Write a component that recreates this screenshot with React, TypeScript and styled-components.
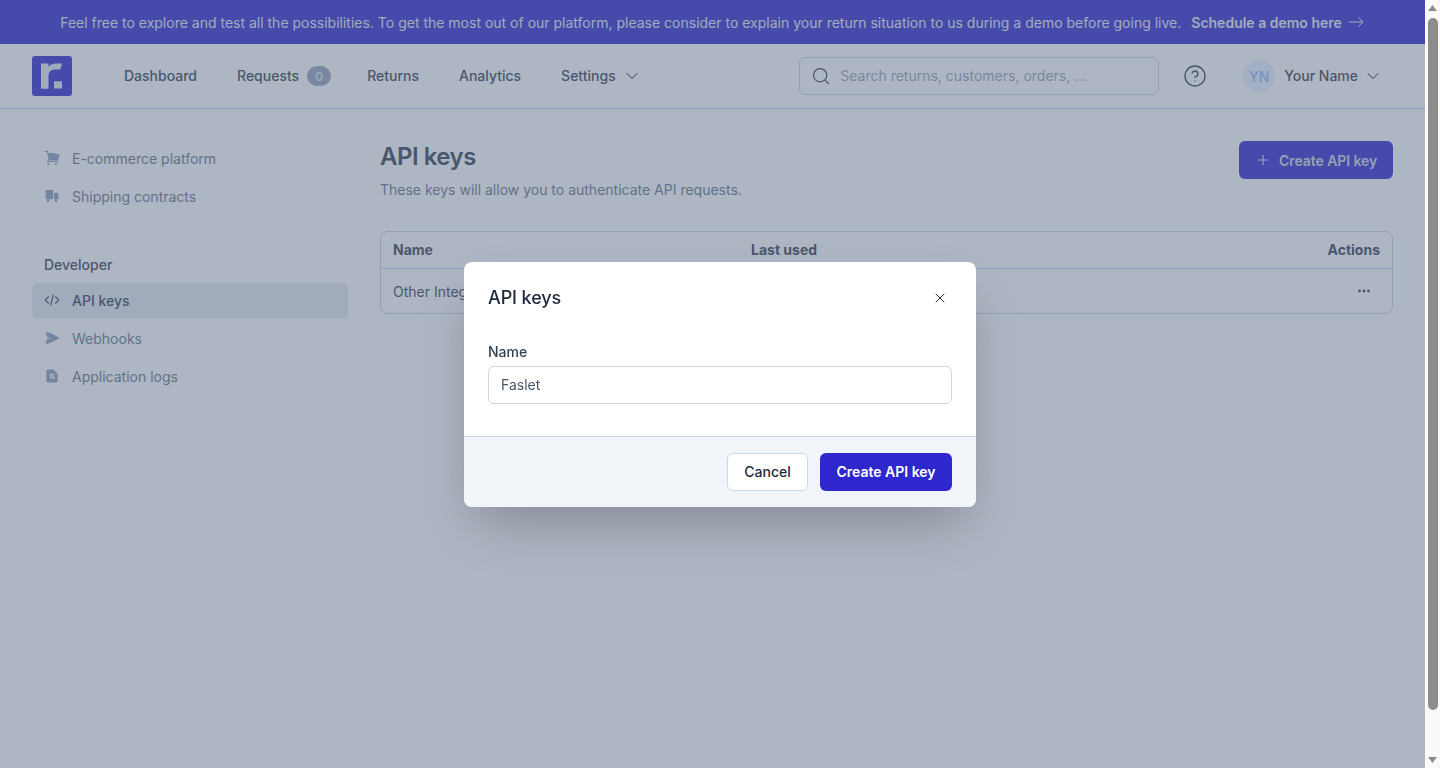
import React from "react";
import styled, { createGlobalStyle } from "styled-components";
import { ChevronDown, CircleHelp, Plus, Search, X } from "lucide-react";

const GlobalStyle = createGlobalStyle`
  html, body {
    margin: 0;
    padding: 0;
    height: 100%;
    overflow: hidden;
    background: #ffffff;
    font-family: "Inter", "Liberation Sans", sans-serif;
    font-size: 14px;
    color: #334155;
  }
  * { box-sizing: border-box; }
`;

const Page = styled.div`
  height: 768px;
  padding-right: 15px;
  display: flex;
  flex-direction: column;
`;

const Banner = styled.div`
  height: 44px;
  flex: none;
  display: flex;
  align-items: center;
  justify-content: center;
  gap: 10px;
  background: #2e27ce;
  color: #e2e8f0;
  font-size: 14px;
`;

const BannerLink = styled.a`
  display: flex;
  align-items: center;
  gap: 7px;
  font-weight: 600;
  color: #e2e8f0;
`;

const ArrowIcon = styled.svg`
  width: 16px;
  height: 14px;
  fill: none;
  stroke: currentColor;
  stroke-width: 1;
`;

const Header = styled.header`
  height: 65px;
  flex: none;
  display: flex;
  align-items: center;
  padding: 0 32px;
  border-bottom: 1px solid #c5d3e6;
  background: #ffffff;
`;

const Logo = styled.svg`
  width: 40px;
  height: 40px;
  flex: none;
  margin-right: 52px;
`;

const Nav = styled.nav`
  display: flex;
  align-items: center;
  gap: 40px;
`;

const NavItem = styled.a`
  display: flex;
  align-items: center;
  gap: 8px;
  font-weight: 500;
  color: #334155;
`;

const NavLabel = styled.span`
  padding-bottom: 2px;
`;

const CountBadge = styled.span`
  width: 24px;
  height: 20px;
  margin-right: -4px;
  border-radius: 10px;
  background: #94a3b8;
  color: #e2e8f0;
  font-size: 12px;
  display: flex;
  align-items: center;
  justify-content: center;
`;

const NavChevron = styled(ChevronDown)`
  margin-left: -2px;
`;

const SearchBox = styled.div`
  width: 360px;
  height: 38px;
  margin-left: auto;
  display: flex;
  align-items: center;
  gap: 9px;
  padding: 0 11px;
  border: 1px solid #c5d3e6;
  border-radius: 6px;
  color: #334155;
`;

const SearchHint = styled.span`
  padding-bottom: 2px;
  color: #94a3b8;
`;

const HelpButton = styled.span`
  display: flex;
  margin-left: 24px;
  color: #334155;
`;

const UserMenu = styled.div`
  display: flex;
  align-items: center;
  margin-left: 36px;
  margin-right: 10px;
  font-weight: 500;
  color: #334155;
`;

const Avatar = styled.span`
  width: 32px;
  height: 32px;
  border-radius: 50%;
  background: #e8f0fe;
  color: #93b4fa;
  display: flex;
  align-items: center;
  justify-content: center;
  margin-right: 9px;
`;

const UserChevron = styled(ChevronDown)`
  margin-left: 5px;
`;

const Body = styled.div`
  flex: 1;
  display: flex;
  gap: 32px;
  padding: 32px;
`;

const Sidebar = styled.aside`
  width: 316px;
  flex: none;
`;

const SideGroup = styled.div`
  display: flex;
  flex-direction: column;
  gap: 2px;
  margin-bottom: 30px;
`;

const SideHeading = styled.div`
  height: 36px;
  padding: 2px 12px 0;
  display: flex;
  align-items: center;
  font-weight: 500;
  color: #334155;
`;

const SideItem = styled.a<{ $active?: boolean }>`
  height: 36px;
  padding: 0 12px 2px;
  display: flex;
  align-items: center;
  gap: 12px;
  border-radius: 6px;
  font-weight: ${({ $active }) => ($active ? 500 : 400)};
  background: ${({ $active }) => ($active ? "#e2e8f0" : "transparent")};
  color: ${({ $active }) => ($active ? "#334155" : "#64748b")};
  svg {
    width: 16px;
    height: 16px;
    flex: none;
    color: ${({ $active }) => ($active ? "#475569" : "#8a9dbb")};
  }
`;

const Main = styled.main`
  flex: 1;
  min-width: 0;
`;

const TitleRow = styled.div`
  display: flex;
  align-items: flex-start;
  justify-content: space-between;
  margin-bottom: 31px;
`;

const Title = styled.h1`
  margin: 0 0 7px;
  font-size: 24px;
  line-height: 32px;
  font-weight: 600;
  letter-spacing: -0.5px;
  color: #334155;
`;

const Subtitle = styled.p`
  margin: 0;
  line-height: 20px;
  color: #64748b;
`;

const PrimaryButton = styled.button`
  width: 154px;
  height: 38px;
  padding: 0 0 0 16px;
  display: flex;
  align-items: center;
  gap: 8px;
  border: none;
  border-radius: 6px;
  background: #2e27ce;
  color: #cbd5e1;
  font-family: inherit;
  font-size: 14px;
  font-weight: 600;
  letter-spacing: -0.07px;
`;

const Table = styled.div`
  border: 1px solid #c5d3e6;
  border-radius: 8px;
`;

const TableRow = styled.div<{ $head?: boolean }>`
  display: grid;
  grid-template-columns: 358px 1fr 100px;
  align-items: center;
  padding: ${({ $head }) => ($head ? "0 12px 2px" : "0 12px")};
  height: ${({ $head }) => ($head ? "37px" : "44px")};
  font-weight: ${({ $head }) => ($head ? 700 : 400)};
  border-bottom: ${({ $head }) => ($head ? "1px solid #c5d3e6" : "none")};
`;

const ActionsCell = styled.div`
  display: flex;
  justify-content: flex-end;
`;

const Dots = styled.svg`
  width: 14px;
  height: 4px;
  margin-right: 9px;
  color: #334155;
`;

const Overlay = styled.div`
  position: fixed;
  inset: 0;
  display: flex;
  align-items: center;
  justify-content: center;
  background: rgba(93, 109, 135, 0.5);
`;

const Modal = styled.div`
  width: 512px;
  background: #ffffff;
  border-radius: 8px;
  overflow: hidden;
  box-shadow: 0 25px 50px -12px rgba(0, 0, 0, 0.25);
`;

const ModalBody = styled.div`
  padding: 24px 24px 32px;
`;

const ModalHead = styled.div`
  display: flex;
  align-items: center;
  justify-content: space-between;
  height: 24px;
  margin-bottom: 32px;
  padding-right: 4px;
`;

const ModalTitle = styled.h2`
  margin: 0;
  font-size: 18px;
  font-weight: 500;
  letter-spacing: -0.1px;
  color: #1e293b;
`;

const CloseButton = styled.span`
  display: flex;
  color: #1e293b;
`;

const FieldLabel = styled.label`
  display: block;
  margin-bottom: 4px;
  line-height: 20px;
  font-weight: 500;
  color: #334155;
`;

const TextInput = styled.input`
  display: block;
  width: 100%;
  height: 38px;
  padding: 0 12px;
  border: 1px solid #c9d7e6;
  border-radius: 6px;
  background: #ffffff;
  font-family: inherit;
  font-size: 14px;
  color: #475569;
  outline: none;
`;

const ModalFooter = styled.div`
  display: flex;
  justify-content: flex-end;
  gap: 12px;
  padding: 16px 24px;
  border-top: 1px solid #c9d7e6;
  background: #f1f4f9;
`;

const CancelButton = styled.button`
  min-width: 81px;
  height: 38px;
  padding: 0 16px;
  border: 1px solid #c9d7e6;
  border-radius: 6px;
  background: #ffffff;
  font-family: inherit;
  font-size: 14px;
  font-weight: 500;
  color: #1e293b;
`;

const SubmitButton = styled(CancelButton)`
  min-width: 132px;
  border: none;
  background: #2e27ce;
  color: #ffffff;
  font-weight: 600;
`;

const ScrollTrack = styled.div`
  position: fixed;
  top: 0;
  right: 0;
  bottom: 0;
  width: 15px;
  padding: 5px 2px;
  display: flex;
  flex-direction: column;
  align-items: center;
  justify-content: space-between;
  background: #fafafa;
`;

const ScrollThumb = styled.div`
  flex: 1;
  width: 10px;
  margin: 7px 0 47px;
  border-radius: 5px;
  background: #8c8c8c;
`;

const ScrollArrow = styled.svg`
  width: 9px;
  height: 6px;
  flex: none;
  fill: #8c8c8c;
`;

export default function App() {
  return (
    <>
      <GlobalStyle />
      <Page>
        <Banner>
          <span>
            Feel free to explore and test all the possibilities. To get the most out of our platform, please consider
            to explain your return situation to us during a demo before going live.
          </span>
          <BannerLink>
            Schedule a demo here
            <ArrowIcon viewBox="0 0 16 14">
              <path d="M0 7h14M9.5 2.5 14 7l-4.5 4.5" />
            </ArrowIcon>
          </BannerLink>
        </Banner>
        <Header>
          <Logo viewBox="0 0 40 40">
            <rect width="40" height="40" rx="3" fill="#2e27ce" />
            <path
              d="M9 7.5h7.5v3.2c1.8-2.2 4.5-3.2 7.5-3.2h6l-1.6 6h-4.4c-4.6 0-7.5 2-7.5 6.5v12.8H9z"
              fill="#e2e8f0"
            />
            <path d="M22 27.5h8v5h-8z" fill="#e2e8f0" />
            <path d="M22 25.5h8v2h-8z" fill="#f8fafc" />
          </Logo>
          <Nav>
            <NavItem>
              <NavLabel>Dashboard</NavLabel>
            </NavItem>
            <NavItem>
              <NavLabel>Requests</NavLabel>
              <CountBadge>0</CountBadge>
            </NavItem>
            <NavItem>
              <NavLabel>Returns</NavLabel>
            </NavItem>
            <NavItem>
              <NavLabel>Analytics</NavLabel>
            </NavItem>
            <NavItem>
              <NavLabel>Settings</NavLabel>
              <NavChevron size={20} strokeWidth={1.25} />
            </NavItem>
          </Nav>
          <SearchBox>
            <Search size={20} strokeWidth={1.5} />
            <SearchHint>Search returns, customers, orders, ...</SearchHint>
          </SearchBox>
          <HelpButton>
            <CircleHelp size={24} strokeWidth={1.4} />
          </HelpButton>
          <UserMenu>
            <Avatar>YN</Avatar>
            <NavLabel>Your Name</NavLabel>
            <UserChevron size={20} strokeWidth={1.25} />
          </UserMenu>
        </Header>
        <Body>
          <Sidebar>
            <SideGroup>
              <SideItem>
                <svg viewBox="0 0 20 20" fill="currentColor">
                  <path d="M1 1.75A.75.75 0 0 1 1.75 1h1.63c.83 0 1.56.56 1.77 1.36l.29 1.07A44 44 0 0 1 19 5.6a.75.75 0 0 1 .6.95 41 41 0 0 1-2.1 5.8.75.75 0 0 1-.68.43H6.5a1 1 0 0 0-.96.73h11.71a.75.75 0 0 1 0 1.5H4.75a.75.75 0 0 1-.75-.75c0-1.2.72-2.24 1.76-2.7L3.7 2.75a.33.33 0 0 0-.32-.25H1.75A.75.75 0 0 1 1 1.75z" />
                  <circle cx="5.5" cy="17.5" r="1.5" />
                  <circle cx="15" cy="17.5" r="1.5" />
                </svg>
                E-commerce platform
              </SideItem>
              <SideItem>
                <svg viewBox="0 0 20 20" fill="currentColor">
                  <path d="M2 2.5h9.5V14H2zM12.5 6H18v8h-5.5z" />
                  <circle cx="5" cy="16" r="1.8" />
                  <circle cx="15" cy="16" r="1.8" />
                </svg>
                Shipping contracts
              </SideItem>
            </SideGroup>
            <SideGroup>
              <SideHeading>Developer</SideHeading>
              <SideItem $active>
                <svg
                  viewBox="0 0 20 20"
                  fill="none"
                  stroke="currentColor"
                  strokeWidth="1.6"
                  strokeLinecap="round"
                  strokeLinejoin="round"
                >
                  <path d="M5.5 6 1.5 10l4 4M14.5 6l4 4-4 4M11.5 3.5l-3 13" />
                </svg>
                API keys
              </SideItem>
              <SideItem>
                <svg viewBox="0 0 20 20" fill="currentColor">
                  <path d="M3.1 2.3a.75.75 0 0 0-.9.95l1.4 4.95a1.5 1.5 0 0 0 1.16 1.07L11 10l-6.24.73a1.5 1.5 0 0 0-1.16 1.07l-1.4 4.95a.75.75 0 0 0 .9.95 60 60 0 0 0 15.3-7.05.75.75 0 0 0 0-1.25A60 60 0 0 0 3.1 2.3z" />
                </svg>
                Webhooks
              </SideItem>
              <SideItem>
                <svg viewBox="0 0 20 20" fill="currentColor" fillRule="evenodd">
                  <path d="M4.5 2A1.5 1.5 0 0 0 3 3.5v13A1.5 1.5 0 0 0 4.5 18h11a1.5 1.5 0 0 0 1.5-1.5V7.6a1.5 1.5 0 0 0-.44-1.06l-4.1-4.1A1.5 1.5 0 0 0 11.4 2zM10 7a3 3 0 1 0 1.4 5.65l1.5 1.5 1.1-1.1-1.5-1.5A3 3 0 0 0 10 7zm0 1.6a1.4 1.4 0 1 1 0 2.8 1.4 1.4 0 0 1 0-2.8z" />
                </svg>
                Application logs
              </SideItem>
            </SideGroup>
          </Sidebar>
          <Main>
            <TitleRow>
              <div>
                <Title>API keys</Title>
                <Subtitle>These keys will allow you to authenticate API requests.</Subtitle>
              </div>
              <PrimaryButton>
                <Plus size={16} strokeWidth={1.75} />
                Create API key
              </PrimaryButton>
            </TitleRow>
            <Table>
              <TableRow $head>
                <div>Name</div>
                <div>Last used</div>
                <ActionsCell>Actions</ActionsCell>
              </TableRow>
              <TableRow>
                <div>Other Integration</div>
                <div />
                <ActionsCell>
                  <Dots viewBox="0 0 14 4" fill="currentColor">
                    <circle cx="2.5" cy="2" r="1.4" />
                    <circle cx="7" cy="2" r="1.4" />
                    <circle cx="11.5" cy="2" r="1.4" />
                  </Dots>
                </ActionsCell>
              </TableRow>
            </Table>
          </Main>
        </Body>
      </Page>
      <Overlay>
        <Modal>
          <ModalBody>
            <ModalHead>
              <ModalTitle>API keys</ModalTitle>
              <CloseButton>
                <X size={16} strokeWidth={1.5} />
              </CloseButton>
            </ModalHead>
            <FieldLabel>Name</FieldLabel>
            <TextInput readOnly value="Faslet" />
          </ModalBody>
          <ModalFooter>
            <CancelButton>Cancel</CancelButton>
            <SubmitButton>Create API key</SubmitButton>
          </ModalFooter>
        </Modal>
      </Overlay>
      <ScrollTrack>
        <ScrollArrow viewBox="0 0 9 6">
          <path d="M4.5 0 9 6H0z" />
        </ScrollArrow>
        <ScrollThumb />
        <ScrollArrow viewBox="0 0 9 6">
          <path d="M0 0h9L4.5 6z" />
        </ScrollArrow>
      </ScrollTrack>
    </>
  );
}
